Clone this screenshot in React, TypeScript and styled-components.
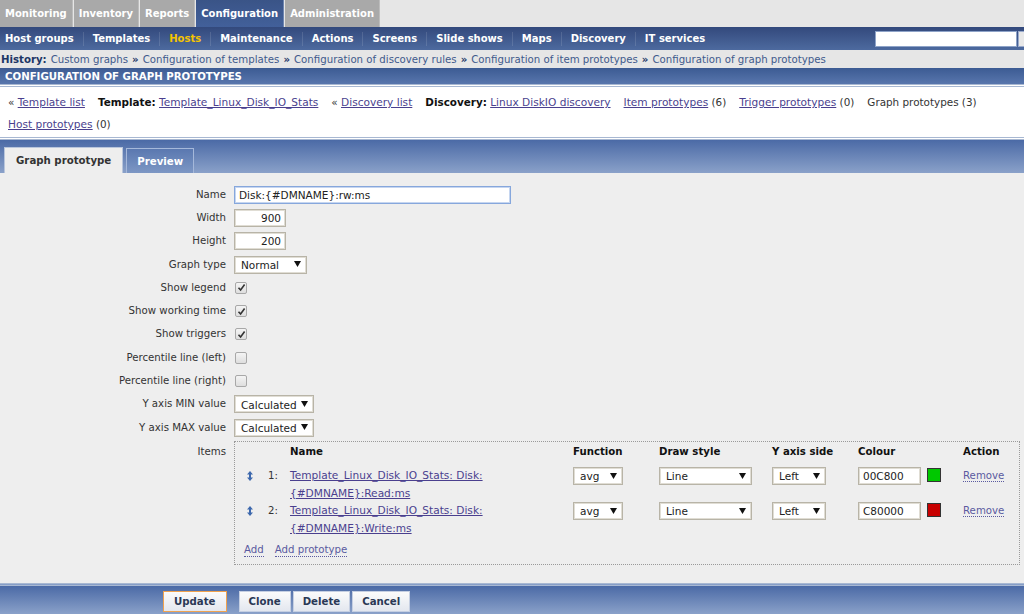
import styled, { createGlobalStyle } from "styled-components";

const GlobalStyle = createGlobalStyle`
    html, body {
        margin: 0;
        padding: 0;
    }
    body {
        font-family: "DejaVu Sans", Tahoma, sans-serif;
        font-size: 10.2px;
        color: #333;
        background: #eeeeee;
        overflow: hidden;
    }
    * {
        box-sizing: border-box;
    }
`;

const topTabs = ["Monitoring", "Inventory", "Reports", "Configuration", "Administration"];
const subItems = [
    "Host groups",
    "Templates",
    "Hosts",
    "Maintenance",
    "Actions",
    "Screens",
    "Slide shows",
    "Maps",
    "Discovery",
    "IT services",
];
const history = [
    "Custom graphs",
    "Configuration of templates",
    "Configuration of discovery rules",
    "Configuration of item prototypes",
    "Configuration of graph prototypes",
];

const DownArrow = () => (
    <svg width="7" height="6" viewBox="0 0 7 6">
        <polygon points="0,0 7,0 3.5,6" fill="#111" />
    </svg>
);

const Check = () => (
    <svg width="9" height="9" viewBox="0 0 9 9">
        <path d="M1.5 4.8 L3.6 7 L7.6 1.6" stroke="#333" strokeWidth="1.6" fill="none" />
    </svg>
);

const DragIcon = () => (
    <svg width="6" height="10" viewBox="0 0 6 10">
        <polygon points="3,0 6,3.5 0,3.5" fill="#3d68ad" />
        <rect x="2" y="3" width="2" height="4" fill="#3d68ad" />
        <polygon points="3,10 6,6.5 0,6.5" fill="#3d68ad" />
    </svg>
);

const Select = ({ value, width }: { value: string; width: number }) => (
    <SelectBox $width={width}>
        <span>{value}</span>
        <DownArrow />
    </SelectBox>
);

const CheckBox = ({ checked }: { checked?: boolean }) => <Box>{checked && <Check />}</Box>;

type Item = { n: number; name: string; colour: string };
const items: Item[] = [
    { n: 1, name: "Read", colour: "00C800" },
    { n: 2, name: "Write", colour: "C80000" },
];

const App = () => {
    return (
        <Page>
            <GlobalStyle />
            <TopMenu>
                {topTabs.map((t) => (
                    <TopTab key={t} $active={t === "Configuration"}>
                        {t}
                    </TopTab>
                ))}
            </TopMenu>
            <SubMenu>
                {subItems.map((s) => (
                    <SubItem key={s} $active={s === "Hosts"}>
                        {s}
                    </SubItem>
                ))}
                <Search type="text" />
                <SearchButton />
            </SubMenu>
            <History>
                <b>History:</b>
                {history.map((h, i) => (
                    <span key={h}>
                        {i > 0 && <Sep>»</Sep>}
                        <HistoryLink>{h}</HistoryLink>
                    </span>
                ))}
            </History>
            <TitleBar>CONFIGURATION OF GRAPH PROTOTYPES</TitleBar>
            <HeaderNav>
                <span>
                    « <Link>Template list</Link>
                </span>
                <span>
                    <b>Template:</b> <Link>Template_Linux_Disk_IO_Stats</Link>
                </span>
                <span>
                    « <Link>Discovery list</Link>
                </span>
                <span>
                    <b>Discovery:</b> <Link>Linux DiskIO discovery</Link>
                </span>
                <span>
                    <Link>Item prototypes</Link> (6)
                </span>
                <span>
                    <Link>Trigger prototypes</Link> (0)
                </span>
                <span>Graph prototypes (3)</span>
                <span>
                    <Link>Host prototypes</Link> (0)
                </span>
            </HeaderNav>
            <TabBar>
                <Tab $active>Graph prototype</Tab>
                <Tab>Preview</Tab>
            </TabBar>
            <Form>
                <Row>
                    <Label>Name</Label>
                    <Input $width={277} $focus defaultValue="Disk:{#DMNAME}:rw:ms" />
                </Row>
                <Row>
                    <Label>Width</Label>
                    <Input $width={52} $right defaultValue="900" />
                </Row>
                <Row>
                    <Label>Height</Label>
                    <Input $width={52} $right defaultValue="200" />
                </Row>
                <Row>
                    <Label>Graph type</Label>
                    <Select value="Normal" width={73} />
                </Row>
                <Row>
                    <Label>Show legend</Label>
                    <CheckBox checked />
                </Row>
                <Row>
                    <Label>Show working time</Label>
                    <CheckBox checked />
                </Row>
                <Row>
                    <Label>Show triggers</Label>
                    <CheckBox checked />
                </Row>
                <Row>
                    <Label>Percentile line (left)</Label>
                    <CheckBox />
                </Row>
                <Row>
                    <Label>Percentile line (right)</Label>
                    <CheckBox />
                </Row>
                <Row>
                    <Label>Y axis MIN value</Label>
                    <Select value="Calculated" width={80} />
                </Row>
                <Row>
                    <Label>Y axis MAX value</Label>
                    <Select value="Calculated" width={80} />
                </Row>
                <ItemsRow>
                    <Label>Items</Label>
                    <ItemsBox>
                        <ItemsGrid>
                            <Head />
                            <Head />
                            <Head>Name</Head>
                            <Head>Function</Head>
                            <Head>Draw style</Head>
                            <Head>Y axis side</Head>
                            <Head>Colour</Head>
                            <Head>Action</Head>
                            {items.map((it) => (
                                <ItemCells key={it.n} item={it} />
                            ))}
                        </ItemsGrid>
                        <AddRow>
                            <DotLink>Add</DotLink>
                            <DotLink>Add prototype</DotLink>
                        </AddRow>
                    </ItemsBox>
                </ItemsRow>
            </Form>
            <BottomBar>
                <Button $primary>Update</Button>
                <ButtonGroup>
                    <Button>Clone</Button>
                    <Button>Delete</Button>
                    <Button>Cancel</Button>
                </ButtonGroup>
            </BottomBar>
        </Page>
    );
};

const ItemCells = ({ item }: { item: Item }) => (
    <>
        <Cell $pad={3}>
            <DragIcon />
        </Cell>
        <Cell $pad={5}>{item.n}:</Cell>
        <Cell>
            <Link>
                Template_Linux_Disk_IO_Stats: Disk:
                <br />
                {`{#DMNAME}:${item.name}:ms`}
            </Link>
        </Cell>
        <Cell>
            <Select value="avg" width={50} />
        </Cell>
        <Cell>
            <Select value="Line" width={93} />
        </Cell>
        <Cell>
            <Select value="Left" width={54} />
        </Cell>
        <Cell>
            <ColourWrap>
                <Input $width={63} defaultValue={item.colour} />
                <Swatch style={{ background: `#${item.colour}` }} />
            </ColourWrap>
        </Cell>
        <Cell>
            <DotLink>Remove</DotLink>
        </Cell>
    </>
);

const Page = styled.div`
    display: flex;
    flex-direction: column;
    width: 1024px;
    height: 614px;
`;

const TopMenu = styled.div`
    display: flex;
    height: 27px;
    background: #e6e6e6;
    gap: 1px;
`;

const TopTab = styled.div<{ $active?: boolean }>`
    display: flex;
    align-items: center;
    padding: 0 5px;
    font-weight: bold;
    font-size: 10px;
    color: #fff;
    background: ${(p) => (p.$active ? "linear-gradient(#3a5487, #42609a)" : "#a9a9a9")};
    border-right: 1px solid ${(p) => (p.$active ? "#6f86b0" : "#bdbdbd")};
`;

const SubMenu = styled.div`
    display: flex;
    align-items: center;
    height: 23px;
    background: linear-gradient(#33497c, #4d6a9f);
    overflow: hidden;
`;

const SubItem = styled.div<{ $active?: boolean }>`
    padding: 0 9px;
    line-height: 14px;
    font-weight: bold;
    font-size: 10px;
    color: ${(p) => (p.$active ? "#f4c400" : "#fff")};
    & + & {
        border-left: 1px solid rgba(255, 255, 255, 0.12);
    }
    &:first-child {
        padding-left: 5px;
    }
`;

const Search = styled.input`
    margin-left: auto;
    width: 142px;
    height: 16px;
    border: 1px solid #8ea3c8;
    background: #fff;
    padding: 0;
`;

const SearchButton = styled.div`
    width: 30px;
    height: 16px;
    margin-left: 1px;
    margin-right: -24px;
    background: #e8e8e8;
    border: 1px solid #9aaacb;
`;

const History = styled.div`
    height: 18px;
    display: flex;
    align-items: center;
    gap: 4px;
    padding-left: 1px;
    background: #e6e6e6;
    white-space: nowrap;
    b {
        color: #1d3666;
    }
`;

const HistoryLink = styled.span`
    color: #3f5a8c;
`;

const Sep = styled.b`
    margin: 0 4px 0 0;
    color: #222;
`;

const TitleBar = styled.div`
    height: 16px;
    display: flex;
    align-items: center;
    padding-left: 5px;
    background: linear-gradient(#3c5b93, #5876ad);
    color: #fff;
    font-weight: bold;
`;

const HeaderNav = styled.div`
    display: flex;
    flex-wrap: wrap;
    column-gap: 13px;
    padding: 4px 8px 2px;
    line-height: 22px;
    font-size: 10.4px;
    background: #fff;
    border-top: 3px double #a8b8d2;
    border-bottom: 3px double #a8b8d2;
    color: #333;
    b {
        color: #111;
    }
`;

const Link = styled.span`
    color: #4a3f8e;
    font-size: 10.6px;
    text-decoration: underline;
    white-space: nowrap;
`;

const TabBar = styled.div`
    display: flex;
    align-items: flex-end;
    gap: 3px;
    height: 33px;
    padding-left: 4px;
    background: linear-gradient(#4b6aa6, #8aa1c9);
`;

const Tab = styled.div<{ $active?: boolean }>`
    display: flex;
    align-items: center;
    padding: 0 ${(p) => (p.$active ? "11px" : "10px")};
    height: ${(p) => (p.$active ? "26px" : "25px")};
    font-weight: bold;
    color: ${(p) => (p.$active ? "#333" : "#fff")};
    background: ${(p) => (p.$active ? "#eeeeee" : "linear-gradient(#5a78b0, #7d97c4)")};
    border: 1px solid ${(p) => (p.$active ? "#b9c6dc" : "#a5b8da")};
    border-bottom: none;
`;

const Form = styled.div`
    flex: 1;
    padding-top: 10px;
    background: #eeeeee;
`;

const Row = styled.div`
    display: flex;
    align-items: center;
    height: 23.3px;
`;

const ItemsRow = styled.div`
    display: flex;
    align-items: flex-start;
    margin-top: 2px;
`;

const Label = styled.div`
    width: 226px;
    margin-right: 8px;
    text-align: right;
    line-height: 18px;
    color: #333;
    ${ItemsRow} & {
        padding-top: 2px;
    }
`;

const Input = styled.input<{ $width: number; $right?: boolean; $focus?: boolean }>`
    width: ${(p) => p.$width}px;
    height: 18px;
    padding: 0 4px;
    font: inherit;
    font-size: 10.5px;
    color: #222;
    text-align: ${(p) => (p.$right ? "right" : "left")};
    background: #fff;
    border: 1px solid ${(p) => (p.$focus ? "#86a7dc" : "#b8b4a7")};
    box-shadow: inset 0 0 0 1px ${(p) => (p.$focus ? "#c6d6f0" : "#e0ddd4")};
    outline: none;
`;

const SelectBox = styled.div<{ $width: number }>`
    display: flex;
    align-items: center;
    justify-content: space-between;
    width: ${(p) => p.$width}px;
    height: 18px;
    padding: 1px 5px 0 6px;
    font-size: 10.5px;
    color: #222;
    background: #fff;
    border: 1px solid #b8b4a7;
    box-shadow: inset 0 0 0 1px #e0ddd4;
    svg {
        margin-top: -2px;
    }
`;

const Box = styled.span`
    display: inline-flex;
    align-items: center;
    justify-content: center;
    width: 12px;
    height: 12px;
    margin-left: 1px;
    border: 1px solid #a8a8a8;
    border-radius: 2px;
    background: linear-gradient(#f4f4f4, #dedede);
`;

const ItemsBox = styled.div`
    width: 786px;
    padding: 1px 0 5px 9px;
    border: 1px dotted #9a9a9a;
`;

const ItemsGrid = styled.div`
    display: grid;
    grid-template-columns: 19px 27px 283px 86px 113px 86px 105px 1fr;
    align-items: start;
`;

const Head = styled.div`
    height: 24px;
    line-height: 18px;
    font-weight: bold;
    color: #111;
`;

const Cell = styled.div<{ $pad?: number }>`
    min-height: 35px;
    line-height: 17.5px;
    padding-left: ${(p) => p.$pad ?? 0}px;
    color: #333;
    svg {
        vertical-align: middle;
    }
`;

const ColourWrap = styled.div`
    display: flex;
    align-items: flex-start;
    gap: 6px;
`;

const Swatch = styled.span`
    width: 14px;
    height: 14px;
    margin-top: 1px;
    border: 1px solid #333;
`;

const DotLink = styled.span`
    color: #5a5aa0;
    border-bottom: 1px dotted #5a5aa0;
    line-height: 13px;
`;

const AddRow = styled.div`
    display: flex;
    gap: 11px;
    margin-top: 4px;
    height: 18px;
    align-items: center;
`;

const BottomBar = styled.div`
    display: flex;
    align-items: flex-start;
    gap: 12px;
    height: 31px;
    padding: 5px 0 0 163px;
    border-top: 3px double #a8b8d2;
    background: linear-gradient(#4b6aa6, #8aa1c9);
`;

const ButtonGroup = styled.div`
    display: flex;
    gap: 2px;
`;

const Button = styled.div<{ $primary?: boolean }>`
    display: flex;
    align-items: center;
    height: 21px;
    padding: 0 ${(p) => (p.$primary ? "10px" : "9px")};
    font-weight: bold;
    font-size: 10.2px;
    color: #2a3855;
    background: linear-gradient(#fbfbfb, #e3e7ef);
    border: 1px solid ${(p) => (p.$primary ? "#f0a24e" : "#c5cfe2")};
`;

export default App;
